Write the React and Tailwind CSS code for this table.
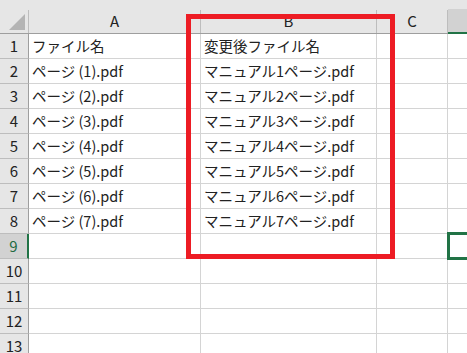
const COLS = [
  { key: 'A', w: 'w-[172px]' },
  { key: 'B', w: 'w-[176px]' },
  { key: 'C', w: 'w-[71px]' },
];

const ROWS = [
  ['ファイル名', '変更後ファイル名'],
  ['ページ (1).pdf', 'マニュアル1ページ.pdf'],
  ['ページ (2).pdf', 'マニュアル2ページ.pdf'],
  ['ページ (3).pdf', 'マニュアル3ページ.pdf'],
  ['ページ (4).pdf', 'マニュアル4ページ.pdf'],
  ['ページ (5).pdf', 'マニュアル5ページ.pdf'],
  ['ページ (6).pdf', 'マニュアル6ページ.pdf'],
  ['ページ (7).pdf', 'マニュアル7ページ.pdf'],
  ['', ''],
  ['', ''],
  ['', ''],
  ['', ''],
  ['', ''],
];

const ACTIVE_ROW = 9;

function HeaderRow() {
  return (
    <div className="flex h-[34px] bg-[#e6e6e6] border-b border-[#9e9e9e]">
      {/* corner with the select-all triangle */}
      <div className="relative w-[29px] shrink-0 border-r border-[#bdbdbd] mt-[10px]">
        <div className="absolute left-[9px] top-[4px] w-0 h-0 border-l-[16px] border-l-transparent border-b-[16px] border-b-[#b4b4b4]" />
      </div>
      {COLS.map((c) => (
        <div
          key={c.key}
          className={`${c.w} shrink-0 mt-[10px] border-r border-[#bdbdbd] flex items-center justify-center text-[15px] text-[#222]`}
        >
          {c.key}
        </div>
      ))}
      <div className="flex-1 mt-[9px] -mb-px bg-[#d2d2d2] border-b-2 border-[#217346]" />
    </div>
  );
}

function BodyRow({ n, cells }) {
  const active = n === ACTIVE_ROW;
  return (
    <div className="flex h-[25px] border-b border-[#d4d4d4]">
      <div
        className={
          active
            ? 'w-[29px] shrink-0 -mb-px bg-[#d2d2d2] border-r-2 border-[#217346] border-b border-b-[#bdbdbd] flex items-center justify-center text-[15px] text-[#1e6b41]'
            : 'w-[29px] shrink-0 -mb-px bg-[#e6e6e6] border-r border-[#9e9e9e] border-b border-b-[#bdbdbd] flex items-center justify-center text-[15px] text-[#222]'
        }
      >
        {n}
      </div>
      <div className="w-[172px] shrink-0 border-r border-[#d4d4d4] pl-[3px] flex items-center text-[14.5px] text-[#222] whitespace-nowrap">
        {cells[0]}
      </div>
      <div className="w-[176px] shrink-0 border-r border-[#d4d4d4] pl-[3px] flex items-center text-[14.5px] text-[#222] whitespace-nowrap">
        {cells[1]}
      </div>
      <div className="w-[71px] shrink-0 border-r border-[#d4d4d4]" />
      <div className="flex-1" />
    </div>
  );
}

export default function App() {
  return (
    <div
      className="relative w-[467px] h-[353px] overflow-hidden bg-white"
      style={{ fontFamily: '"Noto Sans CJK JP", "Noto Sans", sans-serif' }}
    >
      <HeaderRow />
      {ROWS.map((cells, i) => (
        <BodyRow key={i} n={i + 1} cells={cells} />
      ))}

      {/* highlight frame around column B */}
      <div className="absolute left-[186px] top-[14px] w-[209px] h-[245px] border-[5.5px] border-[#ed1c24] pointer-events-none" />

      {/* active cell D9 */}
      <div className="absolute left-[447px] top-[232px] w-[30px] h-[28px] border-[3px] border-[#217346] pointer-events-none" />
    </div>
  );
}
